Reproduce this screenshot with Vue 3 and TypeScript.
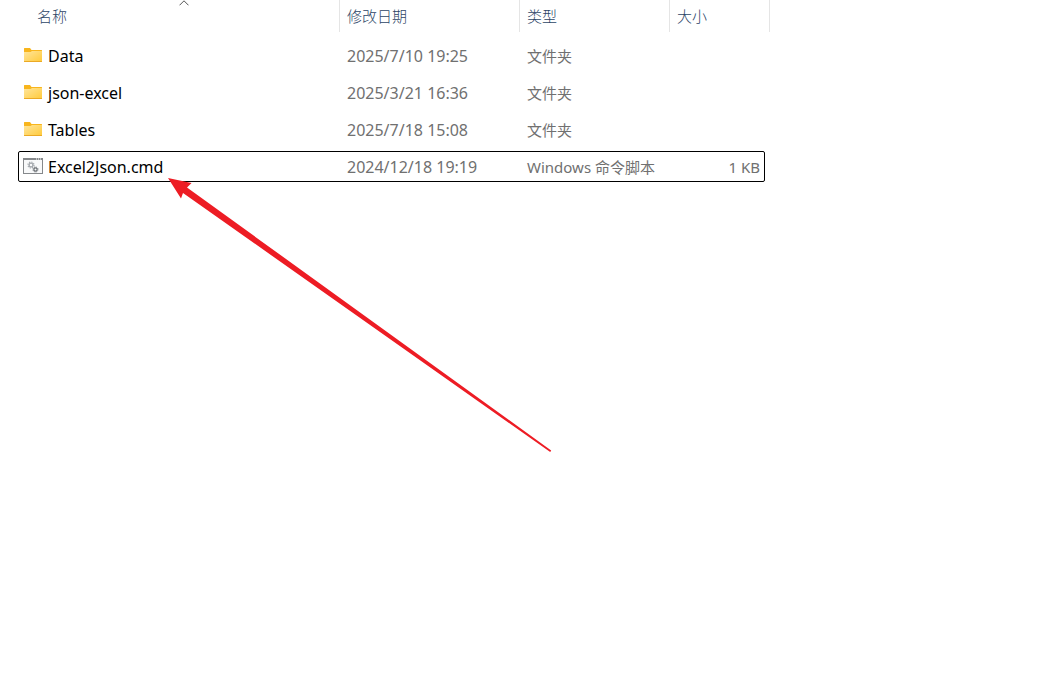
<script setup lang="ts">
interface FileEntry {
  name: string
  modified: string
  type: string
  size: string
  kind: 'folder' | 'script'
  focused?: boolean
}

const entries: FileEntry[] = [
  { name: 'Data', modified: '2025/7/10 19:25', type: '文件夹', size: '', kind: 'folder' },
  { name: 'json-excel', modified: '2025/3/21 16:36', type: '文件夹', size: '', kind: 'folder' },
  { name: 'Tables', modified: '2025/7/18 15:08', type: '文件夹', size: '', kind: 'folder' },
  { name: 'Excel2Json.cmd', modified: '2024/12/18 19:19', type: 'Windows 命令脚本', size: '1 KB', kind: 'script', focused: true },
]
</script>

<template>
  <main class="explorer">
    <table class="files">
      <colgroup>
        <col class="col-name" />
        <col class="col-date" />
        <col class="col-type" />
        <col class="col-size" />
      </colgroup>
      <thead>
        <tr>
          <th class="name-head" scope="col" aria-sort="ascending">
            名称
            <svg class="sort" width="10" height="6" viewBox="0 0 10 6" aria-hidden="true">
              <path d="M.5 5.3 5 .8l4.500 4.500" fill="none" stroke="#555" stroke-width="1" />
            </svg>
          </th>
          <th scope="col">修改日期</th>
          <th scope="col">类型</th>
          <th scope="col">大小</th>
        </tr>
      </thead>
      <tbody>
        <tr v-for="entry in entries" :key="entry.name" :class="{ focused: entry.focused }">
          <td class="name">
            <span class="label">
              <svg v-if="entry.kind === 'folder'" width="20" height="20" viewBox="0 0 20 20" aria-hidden="true">
                <defs>
                  <linearGradient id="folder-front" x1="0" y1="0" x2="1" y2="1">
                    <stop offset="0" stop-color="#ffe59b" />
                    <stop offset="1" stop-color="#ffca3a" />
                  </linearGradient>
                </defs>
                <path d="M1 2.500q0-.5.5-.5H7l1.500 2H18.500q.5 0 .5.500V8H1z" fill="#f8b51c" />
                <path d="M1 6h6.500L9 5H19V15.500q0 .5-.5.500h-17q-.5 0-.5-.5z" fill="url(#folder-front)" />
                <path d="M1 15h18v.5q0 .5-.5.500h-17q-.5 0-.5-.5z" fill="#eba925" />
              </svg>
              <svg v-else width="20" height="20" viewBox="0 0 20 20" aria-hidden="true">
                <rect x=".5" y="1.500" width="19" height="15" fill="#f8f9fa" stroke="#85888b" />
                <path d="M0 1h20v2H0z" fill="#85888b" />
                <path d="M13 2h1M15 2h1M17 2h1" stroke="#fff" />
                <circle cx="8" cy="8" r="1.900" fill="none" stroke="#a3a8ad" stroke-width="1.300" />
                <circle cx="8" cy="8" r="3" fill="none" stroke="#a3a8ad" stroke-width="1.200" stroke-dasharray="1.200 1.156" />
                <circle cx="12.500" cy="12.500" r="1.600" fill="none" stroke="#6b7075" stroke-width="1.200" />
                <circle cx="12.500" cy="12.500" r="2.500" fill="none" stroke="#6b7075" stroke-width="1" stroke-dasharray="1 .963" />
              </svg>
              {{ entry.name }}
            </span>
          </td>
          <td class="date">{{ entry.modified }}</td>
          <td>{{ entry.type }}</td>
          <td class="size">{{ entry.size }}</td>
        </tr>
      </tbody>
    </table>
    <svg class="pointer" width="384" height="275" viewBox="168 178 384 275" aria-hidden="true">
      <path d="M168 178 191.500 183 187 187.500 551.200 450.500 550.200 452 183 193 181 198.500z" fill="#ed1c24" />
    </svg>
  </main>
</template>

<style>
body {
  margin: 0;
  background: #fff;
}
</style>

<style scoped>
.explorer {
  position: relative;
  min-height: 100vh;
  font: 15px/20px "Noto Sans", "Noto Sans CJK SC", sans-serif;
  color: #707070;
}

.files {
  width: 752px;
  margin-left: 18px;
  table-layout: fixed;
  border-collapse: separate;
  border-spacing: 0;
}

.col-name { width: 322px; }
.col-date { width: 180px; }
.col-type { width: 150px; }
.col-size { width: 100px; }

th {
  position: relative;
  height: 32px;
  padding: 0 7px;
  border-right: 1px solid #e5e5e5;
  color: #2c4466;
  font-weight: 300;
  text-align: left;
}

.name-head {
  padding-left: 19px;
}

.sort {
  position: absolute;
  top: 0;
  left: 50%;
}

tbody::before {
  content: "";
  display: block;
  height: 5px;
}

tbody tr {
  position: relative;
}

td {
  height: 37px;
  padding: 0 7px;
  white-space: nowrap;
}

.name {
  padding-left: 5px;
  color: #000;
}

.name,
.date {
  font-size: 16px;
}

.label {
  display: flex;
  align-items: center;
  gap: 5px;
}

.size {
  padding-right: 10px;
  text-align: right;
}

.focused .size::after {
  content: "";
  position: absolute;
  inset: 3px 5px 3px 0;
  border: 1px solid #000;
  border-radius: 2px;
}

.pointer {
  position: absolute;
  top: 178px;
  left: 168px;
}
</style>
